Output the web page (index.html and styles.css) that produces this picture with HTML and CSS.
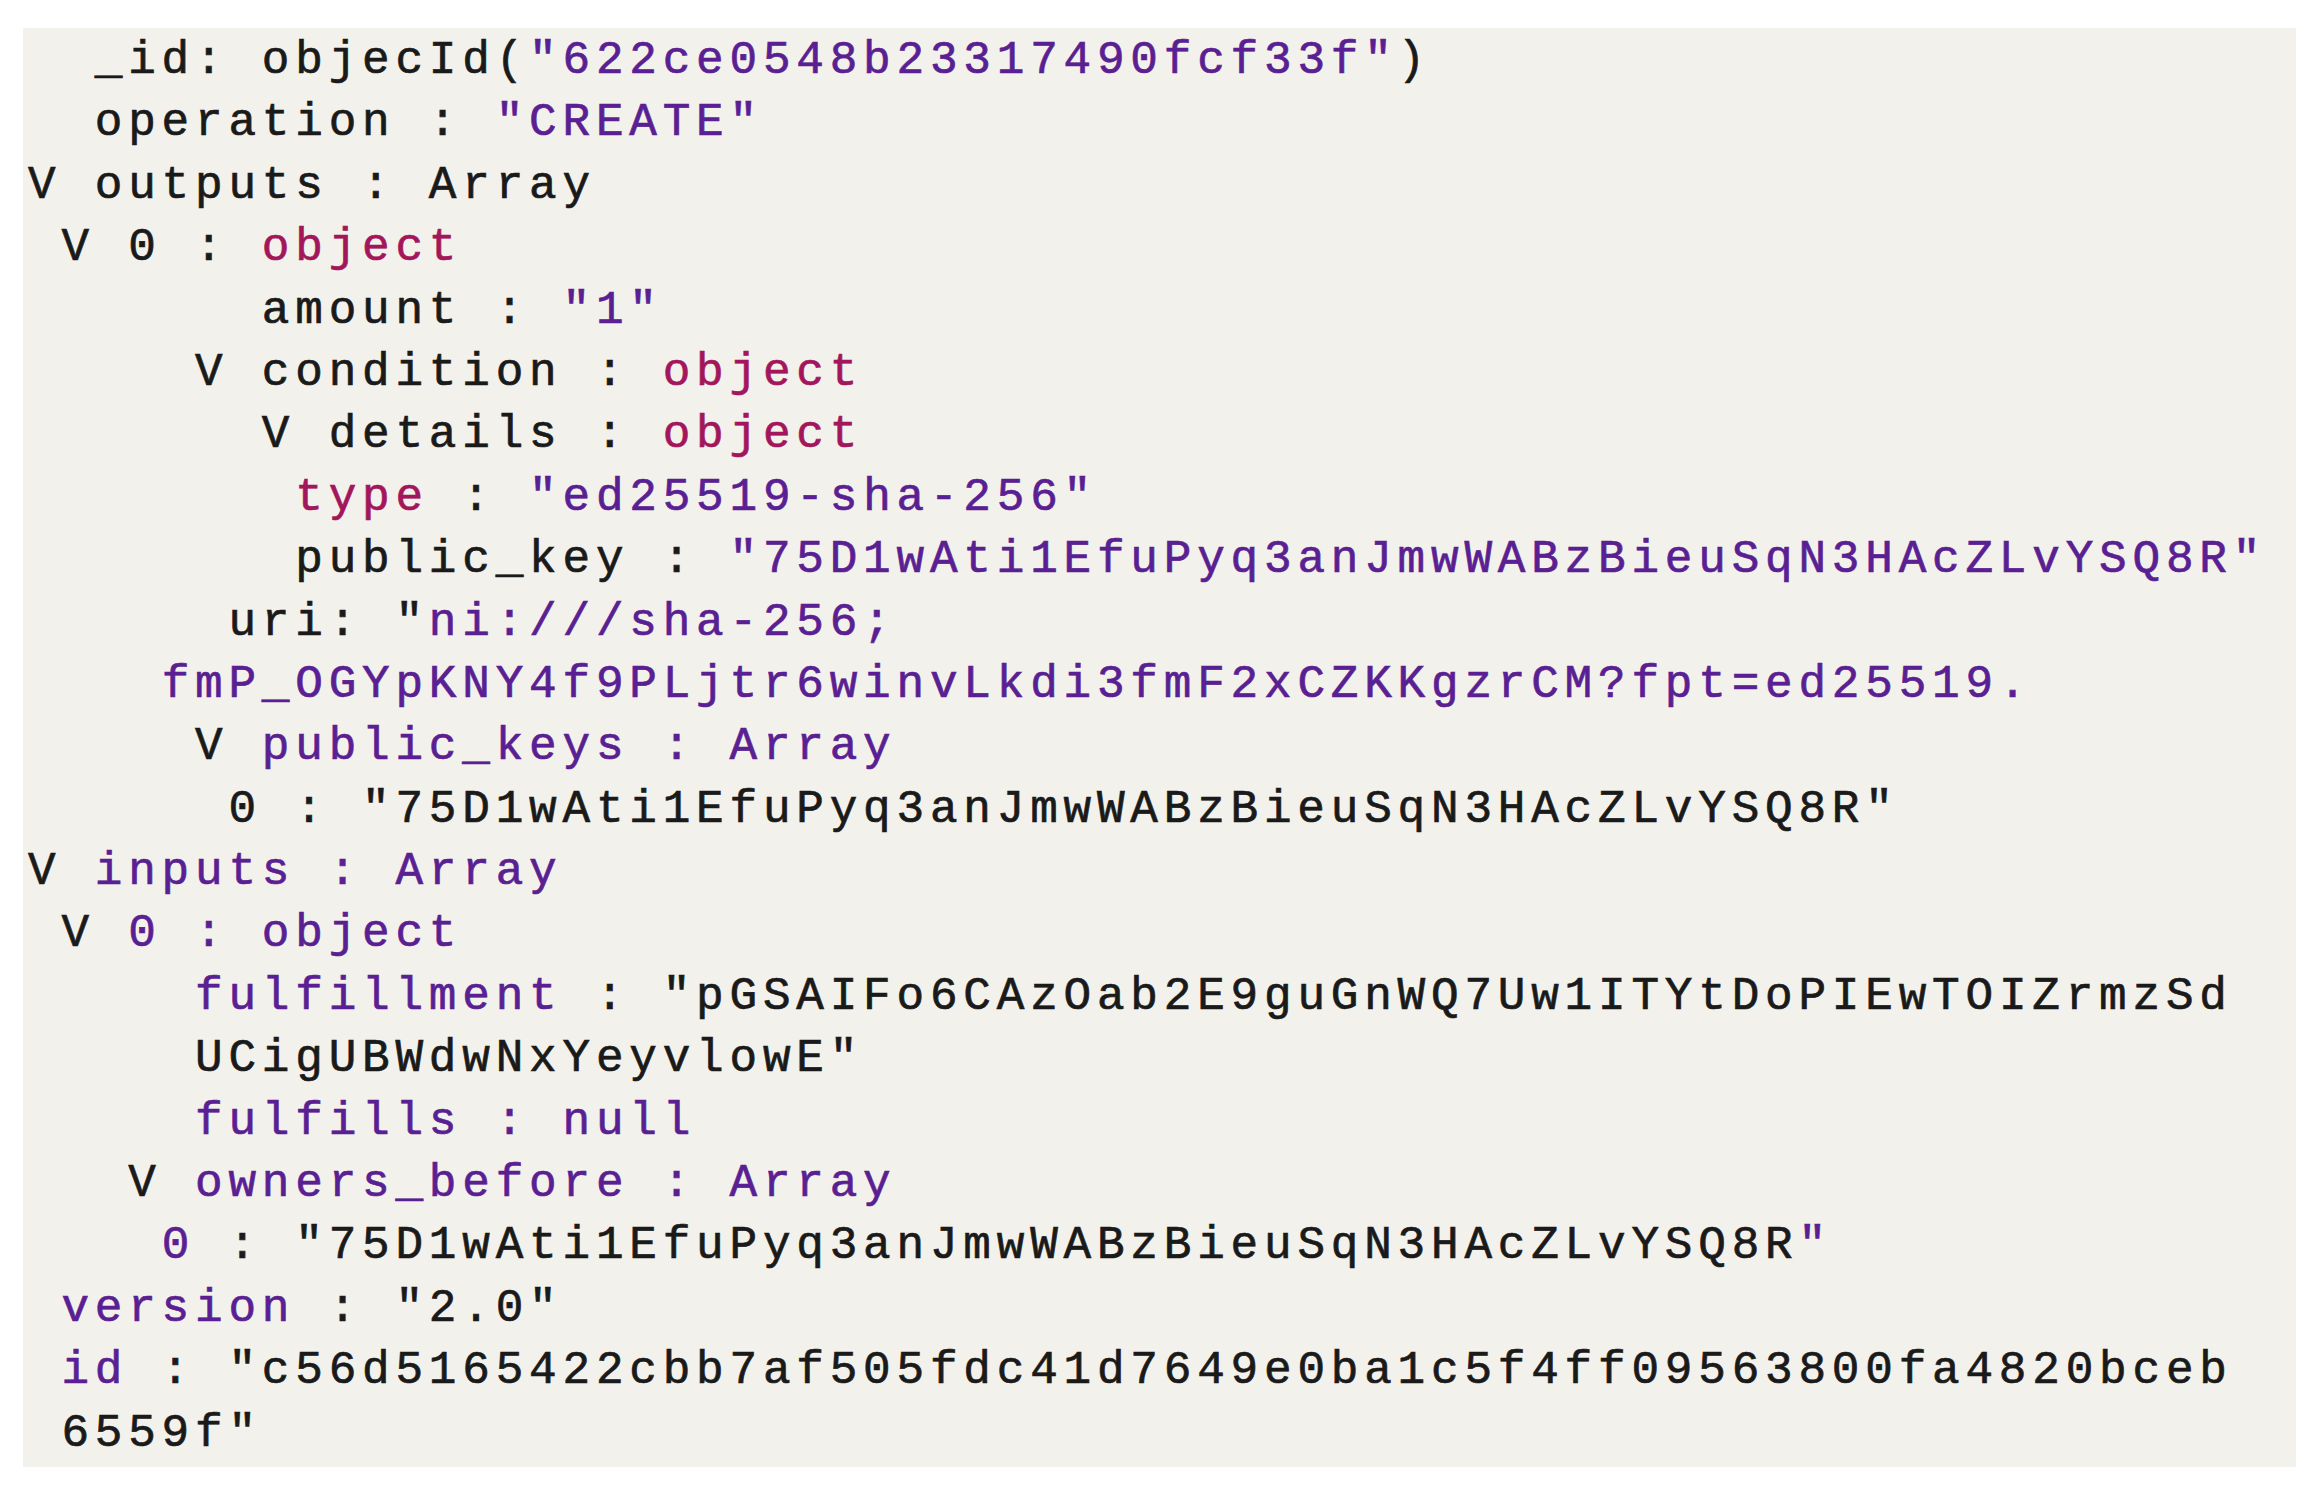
FILE: index.html
```html
<!DOCTYPE html>
<html lang="en">
<head>
<meta charset="utf-8">
<title>Transaction document</title>
<link rel="stylesheet" href="styles.css">
</head>
<body>
<div class="panel">
  <div class="code">
    <div class="ln">  _id: objecId(<span class="s">"622ce0548b23317490fcf33f"</span>)</div>
    <div class="ln">  operation : <span class="s">"CREATE"</span></div>
    <div class="ln">V outputs : Array</div>
    <div class="ln"> V 0 : <span class="t">object</span></div>
    <div class="ln">       amount : <span class="s">"1"</span></div>
    <div class="ln">     V condition : <span class="t">object</span></div>
    <div class="ln">       V details : <span class="t">object</span></div>
    <div class="ln">        <span class="t">type</span> : <span class="s">"ed25519-sha-256"</span></div>
    <div class="ln">        public_key : <span class="s">"75D1wAti1EfuPyq3anJmwWABzBieuSqN3HAcZLvYSQ8R"</span></div>
    <div class="ln">      uri: "<span class="s">ni:///sha-256;</span></div>
    <div class="ln">    <span class="s">fmP_OGYpKNY4f9PLjtr6winvLkdi3fmF2xCZKKgzrCM?fpt=ed25519.</span></div>
    <div class="ln">     V <span class="s">public_keys : Array</span></div>
    <div class="ln">      0 : "75D1wAti1EfuPyq3anJmwWABzBieuSqN3HAcZLvYSQ8R"</div>
    <div class="ln">V <span class="s">inputs : Array</span></div>
    <div class="ln"> V <span class="s">0 : object</span></div>
    <div class="ln">     <span class="s">fulfillment</span> : "pGSAIFo6CAzOab2E9guGnWQ7Uw1ITYtDoPIEwTOIZrmzSd</div>
    <div class="ln">     UCigUBWdwNxYeyvlowE"</div>
    <div class="ln">     <span class="s">fulfills : null</span></div>
    <div class="ln">   V <span class="s">owners_before : Array</span></div>
    <div class="ln">    <span class="s">0</span> : "75D1wAti1EfuPyq3anJmwWABzBieuSqN3HAcZLvYSQ8R<span class="s">"</span></div>
    <div class="ln"> <span class="s">version</span> : "2.0"</div>
    <div class="ln"> <span class="s">id</span> : "c56d5165422cbb7af505fdc41d7649e0ba1c5f4ff09563800fa4820bceb</div>
    <div class="ln"> 6559f"</div>
  </div>
</div>
</body>
</html>
```

FILE: styles.css
```css
html, body {
  margin: 0;
  padding: 0;
  background: #ffffff;
}

body {
  padding: 28px 17px 20px 23px;
}

.panel {
  background: #f2f1eb;
  height: 1439px;
  box-sizing: border-box;
  padding: 2px 0 0 5px;
}

.code {
  display: flex;
  flex-direction: column;
  font-family: "Liberation Mono", "DejaVu Sans Mono", monospace;
  font-size: 46px;
  letter-spacing: 5.8px;
  line-height: 62.4px;
  color: #1a1a1a;
  -webkit-text-stroke: 0.7px currentColor;
}

.ln {
  white-space: pre;
  height: 62.4px;
}

.s {
  color: #5a1f92;
}

.t {
  color: #a3165c;
}
```
